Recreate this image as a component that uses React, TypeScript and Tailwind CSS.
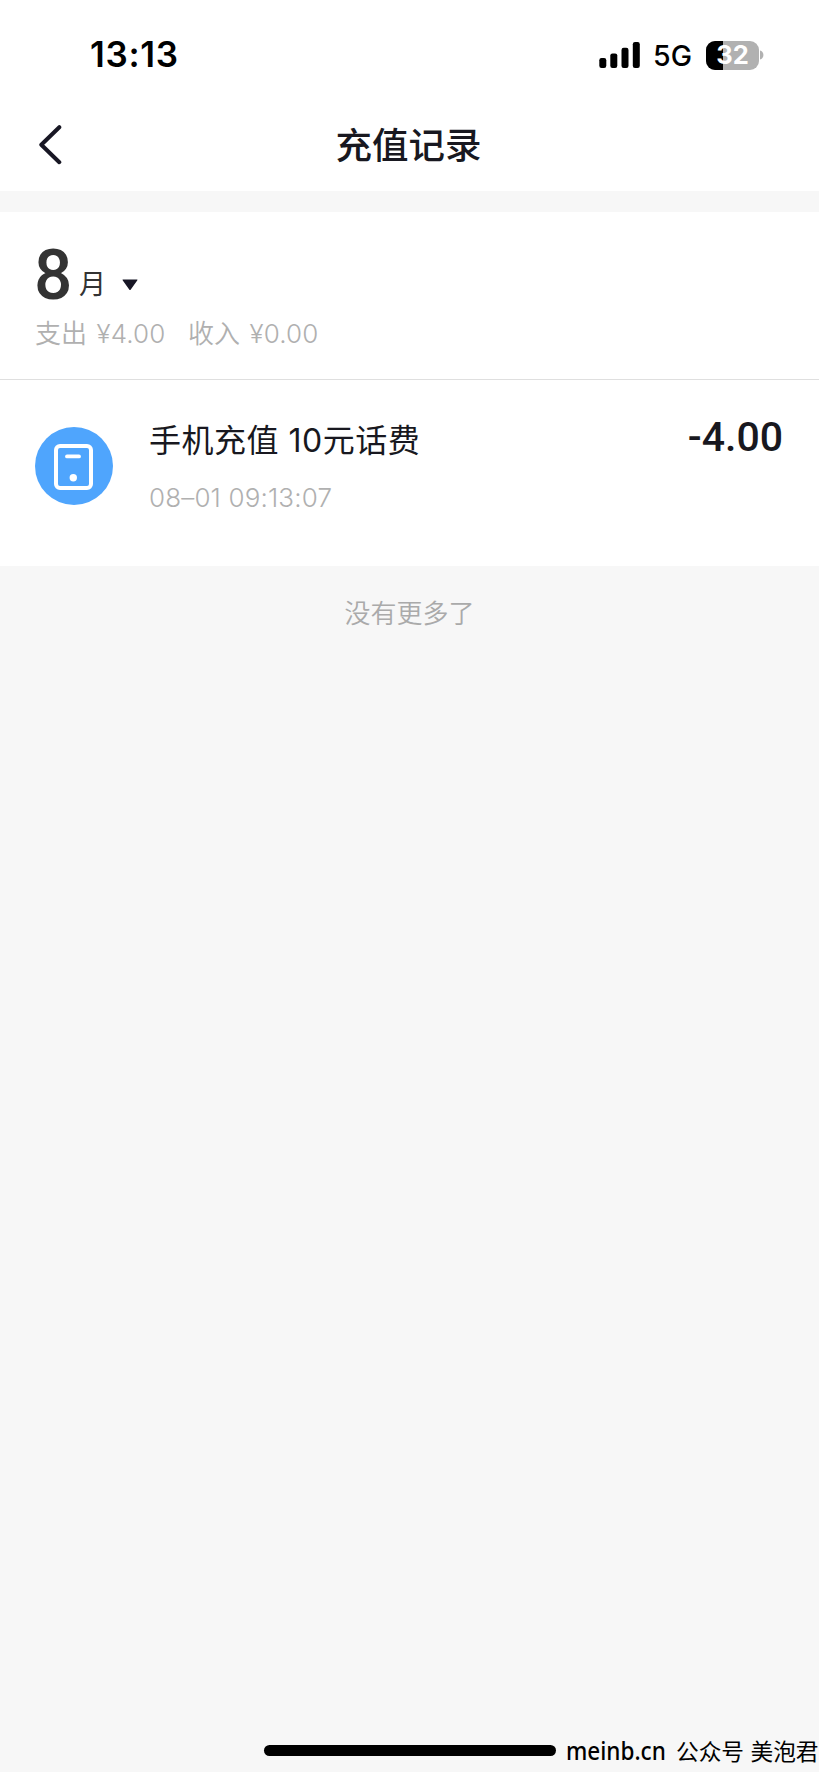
import React from 'react';

interface RechargeRecord {
  id: string;
  title: string;
  time: string;
  amount: string;
}

const records: RechargeRecord[] = [
  { id: '1', title: '手机充值 10元话费', time: '08–01 09:13:07', amount: '-4.00' },
];

const SignalIcon: React.FC = () => (
  <svg width="42" height="28" viewBox="0 0 42 28" className="flex-shrink-0">
    <rect x="0.3" y="17" width="7" height="10" rx="2.2" />
    <rect x="11.3" y="12.4" width="7" height="14.6" rx="2.2" />
    <rect x="22.5" y="6.8" width="7" height="20.2" rx="2.2" />
    <rect x="33.8" y="1" width="7" height="26" rx="2.2" />
  </svg>
);

const Battery: React.FC<{ level: number }> = ({ level }) => (
  <div className="flex items-center">
    <div className="relative flex h-[29px] w-[53px] items-center justify-center rounded-[9px] bg-[#b1b1b1]">
      <div className="absolute inset-y-0 left-0 rounded-l-[9px] bg-black" style={{ width: `${level}%` }} />
      <span className="relative pb-[1px] text-[25.5px] leading-[32px] font-bold text-white">{level}</span>
    </div>
    <svg width="4" height="10" viewBox="0 0 4 10" className="ml-[1px] fill-[#b1b1b1]">
      <path d="M0 0.5C2 1 3.4 2.7 3.4 5S2 9 0 9.5Z" />
    </svg>
  </div>
);

const StatusBar: React.FC = () => (
  <div className="flex h-[110px] items-center justify-between pl-[90px] pr-[55px]">
    <span className="pb-[1px] text-[35px] font-semibold tracking-[0.7px] text-black">13:13</span>
    <div className="flex items-center">
      <SignalIcon />
      <span className="ml-[12px] mr-[14px] pt-[2px] text-[28.5px] font-medium text-black">5G</span>
      <Battery level={32} />
    </div>
  </div>
);

const NavBar: React.FC = () => (
  <div className="grid h-[81px] grid-cols-[1fr_auto_1fr] items-start">
    <button aria-label="返回" className="ml-[39px] mt-[15px] w-6">
      <svg width="24" height="40" viewBox="0 0 24 40" fill="none" stroke="#181724" strokeWidth="4" strokeLinecap="round" strokeLinejoin="round">
        <path d="M20.3 2.2L2.3 19.7L20.3 37.2" />
      </svg>
    </button>
    <h1 className="mt-[10px] -translate-x-[1px] text-[36.5px] leading-[52px] font-medium text-[#181820]">充值记录</h1>
  </div>
);

const MonthSummary: React.FC = () => (
  <section className="h-[168px] border-b border-[#dfdfdf] bg-white px-[35px] pt-[26px]">
    <div className="flex h-[72px] items-start text-[#333]">
      <span className="w-[45px] origin-left -translate-x-[1px] scale-x-95 font-[Roboto] text-[71px] leading-[73px] font-medium">8</span>
      <span className="mt-[27px] -translate-x-[1px] text-[27px] leading-[40px]">月</span>
      <svg width="16" height="12" viewBox="0 0 16 12" className="ml-[15px] mt-[41px] fill-[#171625]">
        <path d="M1 0.5H15Q16 0.5 15.2 1.6L8.8 10.6Q8 11.6 7.2 10.6L0.8 1.6Q0 0.5 1 0.5Z" />
      </svg>
    </div>
    <div className="mt-[6px] flex text-[26px] leading-[36px] font-[350] tracking-[0.1px] text-[#b0b0b0]">
      <span className="w-[153px] [word-spacing:2px]">支出 ¥4.00</span>
      <span className="[word-spacing:2px]">收入 ¥0.00</span>
    </div>
  </section>
);

const PhoneIcon: React.FC = () => (
  <div className="flex h-[78px] w-[78px] flex-shrink-0 items-center justify-center rounded-full bg-[#4fa5fd] pt-[2px]">
    <svg width="40" height="46" viewBox="0 0 40 46" fill="none" stroke="#fff">
      <rect x="2" y="2" width="35" height="42" rx="4" strokeWidth="4" />
      <path d="M13 12.4H25" strokeWidth="3.8" strokeLinecap="round" />
      <circle cx="19.3" cy="33.8" r="3.7" fill="#fff" stroke="none" />
    </svg>
  </div>
);

const RecordItem: React.FC<{ record: RechargeRecord }> = ({ record }) => (
  <li className="flex h-[186px] items-start bg-white pl-[35px] pr-[37px] pt-[47px]">
    <PhoneIcon />
    <div className="ml-[36px] mt-[-10px] flex-grow">
      <p className="text-[32px] leading-[48px] font-[380] tracking-[0.5px] text-[#181820]">{record.title}</p>
      <p className="mt-[17px] text-[26px] leading-[32px] font-[350] tracking-[0.15px] text-[#b0b0b0]">{record.time}</p>
    </div>
    <span className="mt-[-14px] origin-right translate-x-[1px] font-[Roboto] text-[41px] leading-[48px] font-medium text-[#181820]">{record.amount}</span>
  </li>
);

const App: React.FC = () => (
  <div className="flex h-[1772px] w-[819px] flex-col overflow-hidden bg-[#f7f7f7] font-[Inter,'Noto_Sans_CJK_SC',sans-serif]">
    <header className="bg-white">
      <StatusBar />
      <NavBar />
    </header>
    <main className="mt-[21px] flex-grow">
      <MonthSummary />
      <ul>
        {records.map(record => (
          <RecordItem key={record.id} record={record} />
        ))}
      </ul>
      <p className="mt-[30px] text-center text-[26px] leading-[36px] font-[350] text-[#aaa]">没有更多了</p>
    </main>
    <footer className="flex h-[44px] items-center pl-[264px]">
      <div className="h-[11px] w-[292px] flex-shrink-0 rounded-full bg-black" />
      <div className="ml-[10px] mt-[2px] flex whitespace-nowrap leading-[36px] text-black">
        <span className="w-[110px] origin-left scale-x-92 font-['Noto_Sans',sans-serif] text-[24.5px] font-medium">meinb.cn</span>
        <span className="mt-[1px] w-[143px] text-[22.7px]">公众号 美泡君</span>
      </div>
    </footer>
  </div>
);

export default App;
